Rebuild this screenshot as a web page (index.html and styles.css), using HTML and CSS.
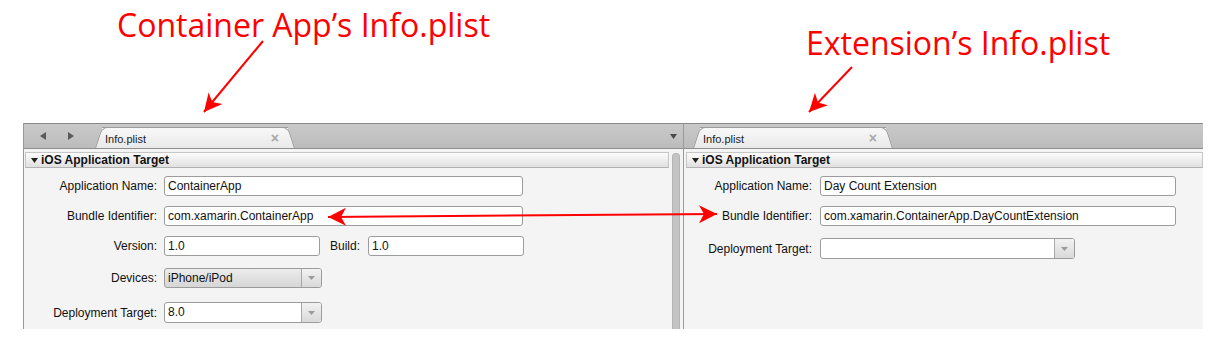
FILE: index.html
```html
<!DOCTYPE html>
<html lang="en">
<head>
    <meta charset="UTF-8">
    <title>Info.plist - Container App and Extension</title>
    <link rel="stylesheet" href="styles.css">
</head>
<body>
    <div class="page">
        <!-- Captions above the two editors -->
        <div class="captions">
            <div class="caption caption-app">Container App’s Info.plist</div>
            <div class="caption caption-ext">Extension’s Info.plist</div>
        </div>

        <div class="workspace">
            <!-- Container app editor -->
            <section class="pane pane-app">
                <div class="tabbar">
                    <div class="nav">
                        <svg width="6" height="8" viewBox="0 0 6 8"><path d="M6 0 L0 4 L6 8 Z" fill="#5a5a5a"/></svg>
                        <svg width="6" height="8" viewBox="0 0 6 8"><path d="M0 0 L6 4 L0 8 Z" fill="#5a5a5a"/></svg>
                    </div>
                    <div class="tab">
                        <span class="tab-title">Info.plist</span>
                        <span class="tab-close">×</span>
                    </div>
                    <svg class="tab-menu" width="7" height="5" viewBox="0 0 7 5"><path d="M0 0 L7 0 L3.5 5 Z" fill="#4a4a4a"/></svg>
                </div>
                <div class="pane-body">
                    <div class="editor">
                        <div class="section-header">
                            <svg width="7" height="5" viewBox="0 0 7 5"><path d="M0 0 L7 0 L3.5 5 Z" fill="#222"/></svg>
                            iOS Application Target
                        </div>
                        <div class="form">
                            <div class="field">
                                <label>Application Name:</label>
                                <div class="input wide">ContainerApp</div>
                            </div>
                            <div class="field">
                                <label>Bundle Identifier:</label>
                                <div class="input wide">com.xamarin.ContainerApp</div>
                            </div>
                            <div class="field">
                                <label>Version:</label>
                                <div class="input short">1.0</div>
                                <span class="inline-label">Build:</span>
                                <div class="input short">1.0</div>
                            </div>
                            <div class="field field-devices">
                                <label>Devices:</label>
                                <div class="select select-grey">
                                    <span class="select-value">iPhone/iPod</span>
                                    <span class="select-button"><svg width="7" height="4" viewBox="0 0 7 4"><path d="M0 0 L7 0 L3.5 4 Z" fill="#9a9a9a"/></svg></span>
                                </div>
                            </div>
                            <div class="field field-target">
                                <label>Deployment Target:</label>
                                <div class="select">
                                    <span class="select-value">8.0</span>
                                    <span class="select-button"><svg width="7" height="4" viewBox="0 0 7 4"><path d="M0 0 L7 0 L3.5 4 Z" fill="#9a9a9a"/></svg></span>
                                </div>
                            </div>
                        </div>
                    </div>
                    <div class="scroll"><div class="scroll-thumb"></div></div>
                </div>
            </section>

            <!-- Extension editor -->
            <section class="pane pane-ext">
                <div class="tabbar">
                    <div class="tab">
                        <span class="tab-title">Info.plist</span>
                        <span class="tab-close">×</span>
                    </div>
                </div>
                <div class="pane-body">
                    <div class="editor">
                        <div class="section-header">
                            <svg width="7" height="5" viewBox="0 0 7 5"><path d="M0 0 L7 0 L3.5 5 Z" fill="#222"/></svg>
                            iOS Application Target
                        </div>
                        <div class="form">
                            <div class="field">
                                <label>Application Name:</label>
                                <div class="input wide">Day Count Extension</div>
                            </div>
                            <div class="field">
                                <label>Bundle Identifier:</label>
                                <div class="input wide">com.xamarin.ContainerApp.DayCountExtension</div>
                            </div>
                            <div class="field field-ext-target">
                                <label>Deployment Target:</label>
                                <div class="select select-long">
                                    <span class="select-value"></span>
                                    <span class="select-button"><svg width="7" height="4" viewBox="0 0 7 4"><path d="M0 0 L7 0 L3.5 4 Z" fill="#9a9a9a"/></svg></span>
                                </div>
                            </div>
                        </div>
                    </div>
                </div>
            </section>
        </div>

        <!-- Red annotation arrows drawn over the screenshot -->
        <svg class="annotations" width="1219" height="343" viewBox="0 0 1219 343">
            <defs>
                <marker id="head" viewBox="-20 -10 21 20" refX="0" refY="0" markerWidth="21" markerHeight="20" markerUnits="userSpaceOnUse" orient="auto-start-reverse">
                    <path d="M0 0 L-18 -9 L-13 0 L-18 9 Z" fill="#f00"/>
                </marker>
            </defs>
            <line x1="263" y1="41" x2="204" y2="112" stroke="#f00" stroke-width="2" marker-end="url(#head)"/>
            <line x1="852" y1="67" x2="809" y2="112" stroke="#f00" stroke-width="2" marker-end="url(#head)"/>
            <line x1="328" y1="217" x2="717" y2="214" stroke="#f00" stroke-width="2" marker-start="url(#head)" marker-end="url(#head)"/>
        </svg>
    </div>
</body>
</html>
```

FILE: styles.css
```css
/* Reset */
* {
    box-sizing: border-box;
    margin: 0;
    padding: 0;
}

body {
    font-family: 'Liberation Sans', Arial, sans-serif;
    font-size: 12px;
    color: #111111;
    background-color: #ffffff;
}

.page {
    position: relative;
    width: 1219px;
    height: 343px;
}

/* Red captions */
.captions {
    display: flex;
    height: 123px;
}

.caption {
    font-family: 'Open Sans', sans-serif;
    font-size: 32px;
    line-height: 32px;
    color: #ff0000;
    white-space: nowrap;
}

.caption-app {
    flex: 0 0 806px;
    padding-left: 117px;
    padding-top: 9px;
}

.caption-ext {
    padding-top: 27px;
}

/* Editors */
.workspace {
    display: flex;
    margin-left: 23px;
    width: 1180px;
    height: 206px;
}

.pane {
    display: flex;
    flex-direction: column;
    background-color: #f4f4f4;
    overflow: hidden;
}

.pane-app {
    width: 661px;
    border-left: 1px solid #9a9a9a;
    border-right: 1px solid #9a9a9a;
}

.pane-ext {
    flex: 1;
}

.tabbar {
    flex-shrink: 0;
    display: flex;
    align-items: flex-end;
    height: 26px;
    border-top: 1px solid #888888;
    border-bottom: 1px solid #8e8e8e;
    background: linear-gradient(#c9c9c9, #bcbcbc);
}

.nav {
    display: flex;
    align-items: center;
    gap: 22px;
    align-self: center;
    width: 72px;
    padding-left: 16px;
}

.tab {
    position: relative;
    display: flex;
    align-items: center;
    justify-content: space-between;
    width: 186px;
    height: 21px;
    margin-left: 6px;
    padding: 0 9px 0 3px;
    border-top: 1px solid #9c9c9c;
    background: linear-gradient(#f8f8f8, #e9e9e9);
}

.tab::before,
.tab::after {
    content: '';
    position: absolute;
    top: -1px;
    bottom: 0;
    width: 14px;
    border-top: 1px solid #9c9c9c;
    background: linear-gradient(#f8f8f8, #e9e9e9);
    transform-origin: bottom;
}

.tab::before {
    left: -7px;
    border-left: 1px solid #9c9c9c;
    border-top-left-radius: 6px;
    transform: skewX(-18deg);
}

.tab::after {
    right: -7px;
    border-right: 1px solid #9c9c9c;
    border-top-right-radius: 6px;
    transform: skewX(18deg);
}

.tab-title,
.tab-close {
    position: relative;
    z-index: 1;
}

.tab-title {
    font-size: 11px;
    color: #222222;
    padding-top: 2px;
}

.tab-close {
    font-size: 14px;
    font-weight: bold;
    color: #a8a8a8;
}

.pane-ext .tab {
    margin-left: 16px;
}

.tab-menu {
    margin-left: auto;
    margin-right: 6px;
    align-self: center;
}

.pane-body {
    flex: 1;
    min-height: 0;
    display: flex;
}

.editor {
    flex: 1;
    padding-top: 3px;
}

.pane-app .editor {
    padding-left: 1px;
}

.pane-ext .editor {
    padding-left: 2px;
}

.section-header {
    display: flex;
    align-items: center;
    gap: 3px;
    height: 16px;
    padding-left: 5px;
    border: 1px solid #c6c6c6;
    border-bottom-color: #b2b2b2;
    background: linear-gradient(#fcfcfc, #e0e0e0);
    font-weight: bold;
    color: #111111;
}

.scroll {
    width: 14px;
    padding: 4px 3px 0 3px;
}

.scroll-thumb {
    height: 100%;
    border: 1px solid #b4b4b4;
    border-bottom: none;
    border-radius: 4px 4px 0 0;
    background-color: #c4c4c4;
}

/* Form rows (vertical margins between rows collapse) */
.form {
    padding-top: 8px;
}

.field {
    display: flex;
    align-items: center;
    margin-bottom: 10px;
}

.field label {
    flex: 0 0 132px;
    text-align: right;
    margin-right: 7px;
}

.pane-ext .field label {
    flex-basis: 126px;
    margin-right: 8px;
}

.field-devices {
    margin-top: 12px;
}

.field-target {
    margin-top: 14px;
}

.field-ext-target {
    margin-top: 12px;
}

.input {
    height: 20px;
    padding: 2px 3px 0;
    border: 1px solid #9c9c9c;
    border-radius: 3px;
    background-color: #ffffff;
    white-space: nowrap;
}

.pane-app .input.wide {
    width: 359px;
}

.pane-ext .input.wide {
    width: 356px;
}

.input.short {
    width: 156px;
}

.inline-label {
    margin: 0 8px 0 10px;
}

.select {
    display: flex;
    width: 158px;
    height: 21px;
    border: 1px solid #9c9c9c;
    border-radius: 3px;
    background-color: #ffffff;
    overflow: hidden;
}

.select-grey {
    height: 20px;
    background: linear-gradient(#ececec, #d6d6d6);
}

.select-long {
    width: 255px;
}

.select-value {
    flex: 1;
    padding: 2px 3px 0;
}

.select-button {
    display: flex;
    align-items: center;
    justify-content: center;
    width: 20px;
    border-left: 1px solid #a8a8a8;
    background: linear-gradient(#f2f2f2, #d9d9d9);
}

/* Annotation layer */
.annotations {
    position: absolute;
    top: 0;
    left: 0;
    pointer-events: none;
}
```
